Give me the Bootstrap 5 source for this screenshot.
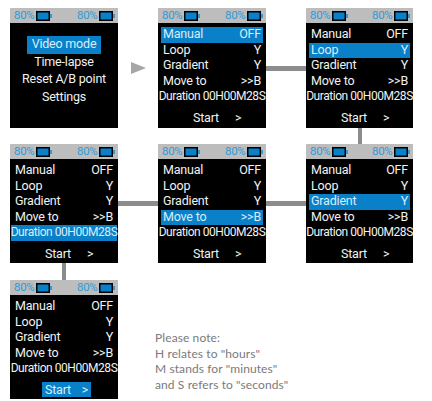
<!DOCTYPE html>
<html lang="en">
<head>
    <meta charset="UTF-8">
    <meta name="viewport" content="width=device-width, initial-scale=1.0">
    <title>Video mode menu</title>
    <link href="https://cdn.jsdelivr.net/npm/bootstrap@5.3.3/dist/css/bootstrap.min.css" rel="stylesheet">
    <style>
        body, html {
            margin: 0;
            background-color: #fff;
            font-family: "Roboto", "Liberation Sans", sans-serif;
        }
        .flow {
            display: grid;
            grid-template-columns: 108px 40px 108px 40px 107px;
            grid-template-rows: 120px 16px 119px 17px 119px;
            padding: 8px 0 0 10px;
        }
        .screen {
            background-color: #000;
            color: #f2f2f2;
            font-size: 12.5px;
            letter-spacing: -0.2px;
            line-height: 14px;
            overflow: hidden;
        }
        .status {
            height: 15px;
            background-color: #bdbdbd;
            color: #2f9bd8;
            font-size: 11.5px;
            line-height: 15px;
            letter-spacing: -0.3px;
            padding: 0 3px 0 4px;
        }
        .status span { width: 19px; }
        .status svg { margin-left: 3px; }
        .rows { padding: 4px 3px 0; }
        .line { padding: 0 2px; height: 15.5px; }
        .line.on, .menu-on, .start-on { background-color: #0a80c8; color: #d8eefb; }
        .line.wide { margin: 0 -2px; padding: 0; white-space: nowrap; justify-content: center; font-size: 12px; letter-spacing: -0.45px; }
        .start-row { margin-top: 5px; height: 15px; line-height: 15px; padding-left: 32px; }
        .start-row b { font-weight: 400; padding: 0 3px; }
        .start-row i { font-style: normal; margin-left: 13px; }
        .start-on { width: 49px; }
        .menu { padding-top: 13px; }
        .menu div { height: 17.5px; line-height: 15px; }
        .menu-on { padding: 0 5px; }
        .arrow { width: 0; height: 0; border-left: 15px solid #a6a6a6; border-top: 6.5px solid transparent; border-bottom: 6.5px solid transparent; margin-left: 13px; }
        .link-h { height: 5px; background-color: #8c8c8c; }
        .link-v { width: 4px; height: 100%; background-color: #8c8c8c; }
        .note { grid-column: 2 / 6; color: #7a7a7a; font-size: 12px; line-height: 15.5px; letter-spacing: 0.1px; font-family: "Lato", "Liberation Sans", sans-serif; padding: 50px 0 0 37px; white-space: nowrap; }
    </style>
</head>
<body>
    <svg width="0" height="0" class="d-block">
        <symbol id="batt" viewBox="0 0 16 10">
            <rect x="0.75" y="0.75" width="12.5" height="8.5" fill="#0a80c8" stroke="#000" stroke-width="1.5"/>
            <rect x="14" y="3" width="2" height="4" fill="#2f9bd8"/>
        </symbol>
    </svg>

    <div class="flow">
        <!-- first row -->
        <div class="screen">
            <div class="status d-flex align-items-center"><span>80%</span><svg width="16" height="10"><use href="#batt"/></svg><span class="ms-auto">80%</span><svg width="16" height="10"><use href="#batt"/></svg></div>
            <div class="menu d-flex flex-column align-items-center">
                <div class="menu-on">Video mode</div>
                <div>Time-lapse</div>
                <div>Reset A/B point</div>
                <div>Settings</div>
            </div>
        </div>
        <div class="d-flex align-items-center"><div class="arrow"></div></div>
        <div class="screen">
            <div class="status d-flex align-items-center"><span>80%</span><svg width="16" height="10"><use href="#batt"/></svg><span class="ms-auto">80%</span><svg width="16" height="10"><use href="#batt"/></svg></div>
            <div class="rows">
                <div class="line on d-flex justify-content-between"><span>Manual</span><span>OFF</span></div>
                <div class="line d-flex justify-content-between"><span>Loop</span><span>Y</span></div>
                <div class="line d-flex justify-content-between"><span>Gradient</span><span>Y</span></div>
                <div class="line d-flex justify-content-between"><span>Move to</span><span>&gt;&gt;B</span></div>
                <div class="line wide d-flex"><span>Duration 00H00M28S</span></div>
            </div>
            <div class="start-row d-flex"><b>Start</b><i>&gt;</i></div>
        </div>
        <div class="d-flex align-items-center"><div class="link-h w-100"></div></div>
        <div class="screen">
            <div class="status d-flex align-items-center"><span>80%</span><svg width="16" height="10"><use href="#batt"/></svg><span class="ms-auto">80%</span><svg width="16" height="10"><use href="#batt"/></svg></div>
            <div class="rows">
                <div class="line d-flex justify-content-between"><span>Manual</span><span>OFF</span></div>
                <div class="line on d-flex justify-content-between"><span>Loop</span><span>Y</span></div>
                <div class="line d-flex justify-content-between"><span>Gradient</span><span>Y</span></div>
                <div class="line d-flex justify-content-between"><span>Move to</span><span>&gt;&gt;B</span></div>
                <div class="line wide d-flex"><span>Duration 00H00M28S</span></div>
            </div>
            <div class="start-row d-flex"><b>Start</b><i>&gt;</i></div>
        </div>

        <!-- links down to second row -->
        <div class="gap-cells"></div>
        <div class="gap-cells"></div>
        <div class="gap-cells"></div>
        <div class="gap-cells"></div>
        <div class="d-flex justify-content-center"><div class="link-v"></div></div>

        <!-- second row -->
        <div class="screen">
            <div class="status d-flex align-items-center"><span>80%</span><svg width="16" height="10"><use href="#batt"/></svg><span class="ms-auto">80%</span><svg width="16" height="10"><use href="#batt"/></svg></div>
            <div class="rows">
                <div class="line d-flex justify-content-between"><span>Manual</span><span>OFF</span></div>
                <div class="line d-flex justify-content-between"><span>Loop</span><span>Y</span></div>
                <div class="line d-flex justify-content-between"><span>Gradient</span><span>Y</span></div>
                <div class="line d-flex justify-content-between"><span>Move to</span><span>&gt;&gt;B</span></div>
                <div class="line on wide d-flex"><span>Duration 00H00M28S</span></div>
            </div>
            <div class="start-row d-flex"><b>Start</b><i>&gt;</i></div>
        </div>
        <div class="d-flex align-items-center"><div class="link-h w-100"></div></div>
        <div class="screen">
            <div class="status d-flex align-items-center"><span>80%</span><svg width="16" height="10"><use href="#batt"/></svg><span class="ms-auto">80%</span><svg width="16" height="10"><use href="#batt"/></svg></div>
            <div class="rows">
                <div class="line d-flex justify-content-between"><span>Manual</span><span>OFF</span></div>
                <div class="line d-flex justify-content-between"><span>Loop</span><span>Y</span></div>
                <div class="line d-flex justify-content-between"><span>Gradient</span><span>Y</span></div>
                <div class="line on d-flex justify-content-between"><span>Move to</span><span>&gt;&gt;B</span></div>
                <div class="line wide d-flex"><span>Duration 00H00M28S</span></div>
            </div>
            <div class="start-row d-flex"><b>Start</b><i>&gt;</i></div>
        </div>
        <div class="d-flex align-items-center"><div class="link-h w-100"></div></div>
        <div class="screen">
            <div class="status d-flex align-items-center"><span>80%</span><svg width="16" height="10"><use href="#batt"/></svg><span class="ms-auto">80%</span><svg width="16" height="10"><use href="#batt"/></svg></div>
            <div class="rows">
                <div class="line d-flex justify-content-between"><span>Manual</span><span>OFF</span></div>
                <div class="line d-flex justify-content-between"><span>Loop</span><span>Y</span></div>
                <div class="line on d-flex justify-content-between"><span>Gradient</span><span>Y</span></div>
                <div class="line d-flex justify-content-between"><span>Move to</span><span>&gt;&gt;B</span></div>
                <div class="line wide d-flex"><span>Duration 00H00M28S</span></div>
            </div>
            <div class="start-row d-flex"><b>Start</b><i>&gt;</i></div>
        </div>

        <!-- link down to last screen -->
        <div class="d-flex justify-content-center"><div class="link-v"></div></div>
        <div class="gap-cells"></div>
        <div class="gap-cells"></div>
        <div class="gap-cells"></div>
        <div class="gap-cells"></div>

        <!-- third row -->
        <div class="screen">
            <div class="status d-flex align-items-center"><span>80%</span><svg width="16" height="10"><use href="#batt"/></svg><span class="ms-auto">80%</span><svg width="16" height="10"><use href="#batt"/></svg></div>
            <div class="rows">
                <div class="line d-flex justify-content-between"><span>Manual</span><span>OFF</span></div>
                <div class="line d-flex justify-content-between"><span>Loop</span><span>Y</span></div>
                <div class="line d-flex justify-content-between"><span>Gradient</span><span>Y</span></div>
                <div class="line d-flex justify-content-between"><span>Move to</span><span>&gt;&gt;B</span></div>
                <div class="line wide d-flex"><span>Duration 00H00M28S</span></div>
            </div>
            <div class="start-row d-flex"><b class="start-on d-flex justify-content-between"><span>Start</span><span>&gt;</span></b></div>
        </div>
        <div class="note">
            Please note:<br>
            H relates to "hours"<br>
            M stands for "minutes"<br>
            and S refers to "seconds"
        </div>
    </div>

    <script src="https://cdn.jsdelivr.net/npm/bootstrap@5.3.3/dist/js/bootstrap.bundle.min.js"></script>
</body>
</html>
